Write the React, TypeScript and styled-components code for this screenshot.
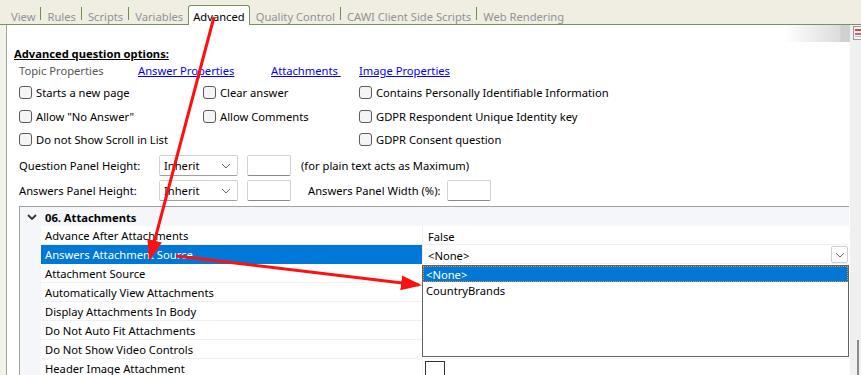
import { Fragment } from "react";
import styled, { createGlobalStyle } from "styled-components";

const GlobalStyle = createGlobalStyle`
  body {
    margin: 0;
    background: #ffffff;
  }
  * {
    box-sizing: border-box;
  }
`;

const Page = styled.div`
  position: relative;
  width: 861px;
  height: 375px;
  overflow: hidden;
  display: flex;
  flex-direction: column;
  font-family: "Noto Sans", "Open Sans", sans-serif;
  font-size: 11.2px;
  color: #000;
  background: #fff;
`;

/* ---------- tab strip ---------- */

const TabStrip = styled.div`
  flex: none;
  height: 25px;
  display: flex;
  align-items: flex-end;
  padding-left: 5px;
  background: #f0eee2;
  border-bottom: 1px solid #77945a;
  font-size: 11.2px;
`;

const Tab = styled.div<{ $active?: boolean }>`
  height: 20px;
  padding: ${(p) => (p.$active ? "3px 4px 0" : "6px 5px 0 6px")};
  line-height: ${(p) => (p.$active ? "16px" : "14px")};
  margin-bottom: ${(p) => (p.$active ? "-1px" : "0")};
  color: ${(p) => (p.$active ? "#000" : "#929292")};
  background: ${(p) => (p.$active ? "#fff" : "transparent")};
  border: ${(p) => (p.$active ? "1px solid #77945a" : "none")};
  border-bottom: none;
  border-radius: 3px 3px 0 0;
  white-space: nowrap;
`;

const TabSep = styled.span`
  width: 1px;
  height: 13px;
  margin-bottom: 4px;
  background: #6f8f4f;
`;

/* ---------- body ---------- */

const Main = styled.div`
  flex: 1;
  display: flex;
  min-height: 0;
`;

const LeftEdge = styled.div`
  width: 7px;
  background: #f3f2ea;
  border-right: 1px solid #a8a890;
`;

const Content = styled.div`
  flex: 1;
  display: flex;
  flex-direction: column;
  min-width: 0;
`;

const TopBar = styled.div`
  height: 19px;
  display: flex;
  justify-content: flex-end;
`;

const ToolFade = styled.div`
  width: 66px;
  height: 17px;
  background: linear-gradient(to right, #ffffff, #dcdcdc 85%, #d0d0d0 86%);
`;

const Scrollbar = styled.div`
  width: 11px;
  background: #f0f0f0;
  display: flex;
  flex-direction: column;
  justify-content: space-between;
  align-items: flex-end;
`;

const Thumb = styled.div`
  width: 2px;
  height: 35px;
  margin-right: 2px;
  background: #8a8a8a;
`;

const Title = styled.div`
  margin: 4px 0 0 7px;
  line-height: 16px;
  font-weight: 700;
  text-decoration: underline;
`;

const Options = styled.div`
  padding-left: 12px;
  display: flex;
  flex-direction: column;
`;

const LinksRow = styled.div`
  margin-top: 1px;
  height: 16px;
  line-height: 16px;
  display: flex;
`;

const LinkCell = styled.span<{ $w?: number; $plain?: boolean }>`
  width: ${(p) => (p.$w ? `${p.$w}px` : "auto")};
  color: ${(p) => (p.$plain ? "#555" : "#0000ff")};
  text-decoration: ${(p) => (p.$plain ? "none" : "underline")};
  white-space: pre;
`;

const CheckGrid = styled.div`
  margin-top: 2px;
  display: grid;
  grid-template-columns: 184px 156px auto;
  grid-auto-rows: 23.5px;
`;

const CheckItem = styled.label`
  display: flex;
  align-items: center;
  gap: 4px;
  white-space: nowrap;
`;

const Box = styled.span`
  width: 13px;
  height: 13px;
  border: 1px solid #5b5b5b;
  border-radius: 3px;
  background: #f4f4f4;
  flex: none;
`;

const PanelRows = styled.div`
  margin-top: 3.5px;
  display: flex;
  flex-direction: column;
  gap: 4px;
`;

const PanelRow = styled.div`
  height: 21px;
  display: flex;
  align-items: center;
`;

const FieldLabel = styled.span`
  width: 140px;
  white-space: nowrap;
`;

const SelectBox = styled.div`
  width: 79px;
  height: 21px;
  display: flex;
  align-items: center;
  justify-content: space-between;
  padding: 0 6px 0 4px;
  border: 1px solid #d2d2d2;
  border-bottom-color: #a0a0a0;
  border-radius: 2px;
  background: #fff;
`;

const TextBox = styled.div<{ $ml: number }>`
  width: 44px;
  height: 21px;
  margin-left: ${(p) => p.$ml}px;
  border: 1px solid #d2d2d2;
  border-bottom-color: #8a8a8a;
  border-radius: 2px;
  background: #fff;
`;

const Note = styled.span<{ $ml: number }>`
  margin-left: ${(p) => p.$ml}px;
  white-space: nowrap;
`;

/* ---------- property grid ---------- */

const PropGrid = styled.div`
  position: relative;
  margin: 5px 1px 0 12px;
  border-top: 1px solid #a0a0a0;
  border-left: 1px solid #a0a0a0;
  background: #f4f6fa;
`;

const PropRow = styled.div`
  display: grid;
  grid-template-columns: 21px 381px 1fr;
  height: 19px;
`;

const Gutter = styled.div`
  display: flex;
  align-items: center;
  justify-content: center;
  padding-left: 2px;
`;

const HeaderText = styled.div`
  grid-column: 2 / 4;
  padding: 2px 0 0 4px;
  line-height: 17px;
  font-weight: 700;
`;

const NameCell = styled.div<{ $selected?: boolean }>`
  padding: 2px 0 0 4px;
  line-height: 16px;
  white-space: nowrap;
  background: ${(p) => (p.$selected ? "#0078d7" : "#fff")};
  color: ${(p) => (p.$selected ? "#fff" : "#000")};
  border-bottom: 1px solid ${(p) => (p.$selected ? "#0078d7" : "#f0f0f0")};
`;

const ValueCell = styled.div`
  display: flex;
  align-items: center;
  justify-content: space-between;
  padding: 2px 1px 0 5px;
  background: #fff;
  border-left: 1px solid #f0f0f0;
  border-bottom: 1px solid #f0f0f0;
`;

const ComboButton = styled.div`
  width: 17px;
  height: 17px;
  margin-top: -1px;
  display: flex;
  align-items: center;
  justify-content: center;
  border: 1px solid #cfcfcf;
  border-radius: 2px;
  background: #fff;
`;

const EmptySquare = styled.div`
  width: 20px;
  height: 16px;
  margin: 0 0 0 -3px;
  align-self: flex-start;
  border: 1px solid #333;
  border-bottom: none;
`;

const DropList = styled.div`
  position: absolute;
  left: 402px;
  top: 58px;
  width: 427px;
  height: 92px;
  border: 1px solid #646464;
  background: #fff;
`;

const DropItem = styled.div<{ $selected?: boolean }>`
  height: 16px;
  padding-top: 1px;
  line-height: 13px;
  padding-left: 2px;
  background: ${(p) => (p.$selected ? "#0078d7" : "#fff")};
  color: ${(p) => (p.$selected ? "#fff" : "#000")};
  border: 1px ${(p) => (p.$selected ? "dotted #f08a24" : "solid transparent")};
`;

const ArrowLayer = styled.svg`
  position: absolute;
  left: 0;
  top: 0;
  pointer-events: none;
`;

const Chevron = ({ bold }: { bold?: boolean }) => (
  <svg width="10" height="6" viewBox="0 0 10 6">
    <polyline
      points="1,1 5,5 9,1"
      fill="none"
      stroke={bold ? "#333" : "#666"}
      strokeWidth={bold ? 1.8 : 1}
    />
  </svg>
);

const CornerIcon = () => (
  <svg width="8" height="15" viewBox="0 0 8 15">
    <rect x="0.5" y="1.5" width="8" height="13" fill="#f4f4f4" stroke="#9a9a9a" />
    <rect x="2" y="4" width="6" height="2" fill="#e04040" />
    <rect x="2" y="8" width="6" height="2" fill="#e06060" />
    <rect x="2" y="11" width="6" height="1" fill="#c0c0c0" />
  </svg>
);

const tabs = [
  "View",
  "Rules",
  "Scripts",
  "Variables",
  "Advanced",
  "Quality Control",
  "CAWI Client Side Scripts",
  "Web Rendering",
];

const properties = [
  "Advance After Attachments",
  "Answers Attachment Source",
  "Attachment Source",
  "Automatically View Attachments",
  "Display Attachments In Body",
  "Do Not Auto Fit Attachments",
  "Do Not Show Video Controls",
  "Header Image Attachment",
];

function App() {
  const active = "Advanced";

  return (
    <Page>
      <GlobalStyle />
      <TabStrip>
        {tabs.map((t, i) => {
          const next = tabs[i + 1];
          const showSep =
            i < tabs.length - 1 && t !== active && next !== active;
          return (
            <Fragment key={t}>
              <Tab $active={t === active}>{t}</Tab>
              {showSep && <TabSep />}
            </Fragment>
          );
        })}
      </TabStrip>

      <Main>
        <LeftEdge />
        <Content>
          <TopBar>
            <ToolFade />
          </TopBar>
          <Title>Advanced question options:</Title>
          <Options>
            <LinksRow>
              <LinkCell $w={119} $plain>
                Topic Properties
              </LinkCell>
              <LinkCell $w={133}>Answer Properties</LinkCell>
              <LinkCell $w={88}>{"Attachments "}</LinkCell>
              <LinkCell>Image Properties</LinkCell>
            </LinksRow>
            <CheckGrid>
              <CheckItem>
                <Box />
                Starts a new page
              </CheckItem>
              <CheckItem>
                <Box />
                Clear answer
              </CheckItem>
              <CheckItem>
                <Box />
                Contains Personally Identifiable Information
              </CheckItem>
              <CheckItem>
                <Box />
                Allow "No Answer"
              </CheckItem>
              <CheckItem>
                <Box />
                Allow Comments
              </CheckItem>
              <CheckItem>
                <Box />
                GDPR Respondent Unique Identity key
              </CheckItem>
              <CheckItem>
                <Box />
                Do not Show Scroll in List
              </CheckItem>
              <span />
              <CheckItem>
                <Box />
                GDPR Consent question
              </CheckItem>
            </CheckGrid>
            <PanelRows>
              <PanelRow>
                <FieldLabel>Question Panel Height:</FieldLabel>
                <SelectBox>
                  Inherit
                  <Chevron />
                </SelectBox>
                <TextBox $ml={9} />
                <Note $ml={10}>(for plain text acts as Maximum)</Note>
              </PanelRow>
              <PanelRow>
                <FieldLabel>Answers Panel Height:</FieldLabel>
                <SelectBox>
                  Inherit
                  <Chevron />
                </SelectBox>
                <TextBox $ml={9} />
                <Note $ml={17}>Answers Panel Width (%):</Note>
                <TextBox $ml={6} />
              </PanelRow>
            </PanelRows>
          </Options>

          <PropGrid>
            <PropRow>
              <Gutter>
                <Chevron bold />
              </Gutter>
              <HeaderText>06. Attachments</HeaderText>
            </PropRow>
            {properties.map((name, i) => (
              <PropRow key={name}>
                <Gutter />
                <NameCell $selected={i === 1}>{name}</NameCell>
                <ValueCell>
                  {i === 0 && "False"}
                  {i === 1 && (
                    <>
                      {"<None>"}
                      <ComboButton>
                        <Chevron />
                      </ComboButton>
                    </>
                  )}
                  {i === 7 && <EmptySquare />}
                </ValueCell>
              </PropRow>
            ))}
            <DropList>
              <DropItem $selected>{"<None>"}</DropItem>
              <DropItem>CountryBrands</DropItem>
            </DropList>
          </PropGrid>
        </Content>
        <Scrollbar>
          <CornerIcon />
          <Thumb />
        </Scrollbar>
      </Main>

      <ArrowLayer width="861" height="375" viewBox="0 0 861 375">
        <defs>
          <marker
            id="head"
            markerWidth="7"
            markerHeight="5"
            refX="6"
            refY="2.5"
            orient="auto"
            markerUnits="strokeWidth"
          >
            <path d="M0,0 L7,2.5 L0,5 Z" fill="#ff1010" />
          </marker>
        </defs>
        <line
          x1="214"
          y1="17"
          x2="150"
          y2="258"
          stroke="#ff1010"
          strokeWidth="3"
          markerEnd="url(#head)"
        />
        <line
          x1="176"
          y1="256"
          x2="419"
          y2="285"
          stroke="#ff1010"
          strokeWidth="3"
          markerEnd="url(#head)"
        />
      </ArrowLayer>
    </Page>
  );
}

export default App;
